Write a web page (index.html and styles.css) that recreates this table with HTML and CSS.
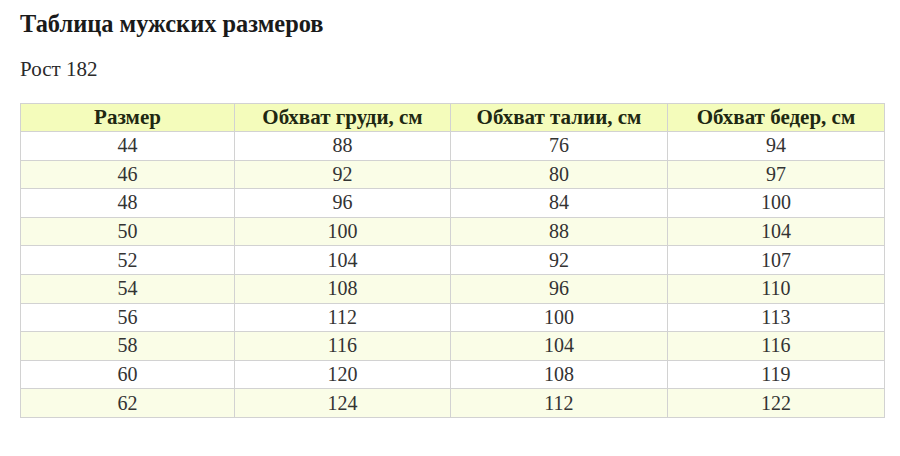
FILE: index.html
```html
<!DOCTYPE html>
<html lang="ru">
<head>
<meta charset="utf-8">
<title>Таблица мужских размеров</title>
<link rel="stylesheet" href="styles.css">
</head>
<body>
<div class="page">
  <h1 class="title">Таблица мужских размеров</h1>
  <p class="height">Рост 182</p>
  <table class="sizes">
    <colgroup>
      <col class="c1"><col class="c2"><col class="c3"><col class="c4">
    </colgroup>
    <thead>
      <tr><th>Размер</th><th>Обхват груди, см</th><th>Обхват талии, см</th><th>Обхват бедер, см</th></tr>
    </thead>
    <tbody>
      <tr><td>44</td><td>88</td><td>76</td><td>94</td></tr>
      <tr><td>46</td><td>92</td><td>80</td><td>97</td></tr>
      <tr><td>48</td><td>96</td><td>84</td><td>100</td></tr>
      <tr><td>50</td><td>100</td><td>88</td><td>104</td></tr>
      <tr><td>52</td><td>104</td><td>92</td><td>107</td></tr>
      <tr><td>54</td><td>108</td><td>96</td><td>110</td></tr>
      <tr><td>56</td><td>112</td><td>100</td><td>113</td></tr>
      <tr><td>58</td><td>116</td><td>104</td><td>116</td></tr>
      <tr><td>60</td><td>120</td><td>108</td><td>119</td></tr>
      <tr><td>62</td><td>124</td><td>112</td><td>122</td></tr>
    </tbody>
  </table>
</div>
</body>
</html>
```
FILE: styles.css
```css
html, body {
  margin: 0;
  padding: 0;
  background: #ffffff;
}
.page {
  padding: 10px 16px 0 20px;
  font-family: "Liberation Serif", "Times New Roman", serif;
  color: #222;
}
.title {
  margin: 0;
  font-size: 24.4px;
  line-height: 28px;
  font-weight: bold;
  color: #1a1a1a;
}
.height {
  margin: 19px 0 0 0;
  font-size: 21px;
  line-height: 24px;
  color: #2a2a2a;
}
.sizes {
  margin-top: 22px;
  width: 864px;
  border-collapse: collapse;
  table-layout: fixed;
  font-size: 20px;
}
.c1 { width: 214px; }
.c2 { width: 216px; }
.c3 { width: 217px; }
.c4 { width: 217px; }
.sizes th, .sizes td {
  border: 1px solid #d2d2d2;
  text-align: center;
  vertical-align: middle;
  padding: 0;
}
.sizes th {
  height: 27px;
  background: #f4fcbb;
  color: #1e2812;
  font-weight: bold;
  font-size: 21px;
}
.sizes td {
  height: 27.6px;
  color: #333;
}
.sizes tbody tr:nth-child(even) td {
  background: #fafde7;
}
```
